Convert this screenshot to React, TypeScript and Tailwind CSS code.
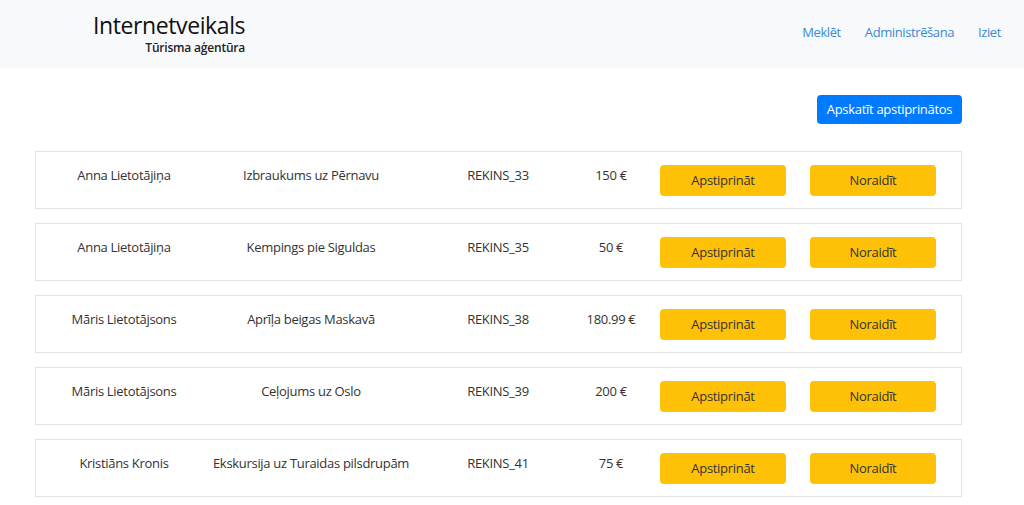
import React from "react";

const rows = [
  { name: "Anna Lietotājiņa", trip: "Izbraukums uz Pērnavu", inv: "REKINS_33", price: "150 €" },
  { name: "Anna Lietotājiņa", trip: "Kempings pie Siguldas", inv: "REKINS_35", price: "50 €" },
  { name: "Māris Lietotājsons", trip: "Aprīļa beigas Maskavā", inv: "REKINS_38", price: "180.99 €" },
  { name: "Māris Lietotājsons", trip: "Ceļojums uz Oslo", inv: "REKINS_39", price: "200 €" },
  { name: "Kristiāns Kronis", trip: "Ekskursija uz Turaidas pilsdrupām", inv: "REKINS_41", price: "75 €" },
];

export default function App() {
  return (
    <div
      className="w-[1024px] h-[505px] overflow-hidden bg-white text-[#212529]"
      style={{ fontFamily: '"Open Sans", "Noto Sans", sans-serif' }}
    >
      <nav className="h-[68px] bg-[#f8f9fa] flex items-center justify-between pl-[93px] pr-[23px]">
        <div className="flex flex-col items-end mt-[-1px]">
          <span className="text-[23px] leading-[26px] tracking-[-0.4px] text-[#111]">Internetveikals</span>
          <span className="mt-[3px] text-[12px] leading-[14px] font-semibold tracking-[-0.2px] text-[#222]">Tūrisma aģentūra</span>
        </div>
        <div className="flex gap-[24px] text-[13px] tracking-[-0.4px] text-[#3a8ad6] mt-[-3px]">
          <span>Meklēt</span>
          <span>Administrēšana</span>
          <span>Iziet</span>
        </div>
      </nav>
      <div className="pl-[35px] w-[962px]">
        <div className="flex justify-end mt-[27px] mb-[27px]">
          <button className="h-[29px] w-[145px] bg-[#007bff] text-white text-[13px] tracking-[-0.3px] rounded-[4px]">
            Apskatīt apstiprinātos
          </button>
        </div>
        <div className="flex flex-col gap-[14px]">
          {rows.map((r, i) => (
            <div
              key={i}
              className="h-[58px] border border-[#e3e3e3] flex items-start text-[13px] tracking-[-0.3px] text-[#333] whitespace-nowrap"
            >
              <div className="w-[176px] text-center pt-[14px]">{r.name}</div>
              <div className="w-[198px] text-center pt-[14px]">{r.trip}</div>
              <div className="w-[176px] text-center pt-[14px]">{r.inv}</div>
              <div className="w-[50px] text-center pt-[14px]">{r.price}</div>
              <button className="ml-[24px] mt-[13px] w-[126px] h-[31px] bg-[#ffc107] rounded-[4px] text-[13px] text-[#333]">
                Apstiprināt
              </button>
              <button className="ml-[24px] mt-[13px] w-[126px] h-[31px] bg-[#ffc107] rounded-[4px] text-[13px] text-[#333]">
                Noraidīt
              </button>
            </div>
          ))}
        </div>
      </div>
    </div>
  );
}
